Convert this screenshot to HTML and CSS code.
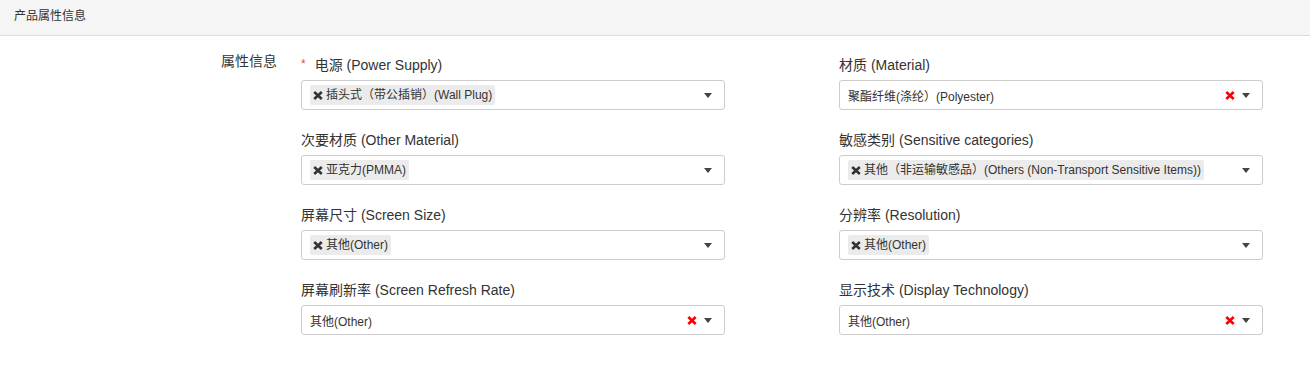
FILE: index.html
```html
<!DOCTYPE html>
<html lang="zh-CN">
<head>
    <meta charset="UTF-8">
    <meta name="viewport" content="width=device-width, initial-scale=1.0">
    <title>产品属性信息</title>
    <link rel="stylesheet" href="styles.css">
</head>
<body>
    <div class="panel-head">产品属性信息</div>
    <div class="panel-body">
        <div class="group-label">属性信息</div>
        <div class="fields">
            <div class="field">
                <label class="field-label"><span class="req">*</span>电源 (Power Supply)</label>
                <div class="select">
                    <div class="select-value">
                        <span class="tag"><svg class="tag-x" width="10" height="9" viewBox="0 0 10 9"><path d="M1.2 1 L8.8 8 M8.8 1 L1.2 8" /></svg>插头式（带公插销）(Wall Plug)</span>
                    </div>
                    <span class="arrow"></span>
                </div>
            </div>
            <div class="field">
                <label class="field-label">材质 (Material)</label>
                <div class="select">
                    <div class="select-value">聚酯纤维(涤纶）(Polyester)</div>
                    <svg class="clear" width="10" height="9" viewBox="0 0 10 9"><path d="M1.3 1 L8.7 8 M8.7 1 L1.3 8" /></svg>
                    <span class="arrow"></span>
                </div>
            </div>
            <div class="field">
                <label class="field-label">次要材质 (Other Material)</label>
                <div class="select">
                    <div class="select-value">
                        <span class="tag"><svg class="tag-x" width="10" height="9" viewBox="0 0 10 9"><path d="M1.2 1 L8.8 8 M8.8 1 L1.2 8" /></svg>亚克力(PMMA)</span>
                    </div>
                    <span class="arrow"></span>
                </div>
            </div>
            <div class="field">
                <label class="field-label">敏感类别 (Sensitive categories)</label>
                <div class="select">
                    <div class="select-value">
                        <span class="tag"><svg class="tag-x" width="10" height="9" viewBox="0 0 10 9"><path d="M1.2 1 L8.8 8 M8.8 1 L1.2 8" /></svg>其他（非运输敏感品）(Others (Non-Transport Sensitive Items))</span>
                    </div>
                    <span class="arrow"></span>
                </div>
            </div>
            <div class="field">
                <label class="field-label">屏幕尺寸 (Screen Size)</label>
                <div class="select">
                    <div class="select-value">
                        <span class="tag"><svg class="tag-x" width="10" height="9" viewBox="0 0 10 9"><path d="M1.2 1 L8.8 8 M8.8 1 L1.2 8" /></svg>其他(Other)</span>
                    </div>
                    <span class="arrow"></span>
                </div>
            </div>
            <div class="field">
                <label class="field-label">分辨率 (Resolution)</label>
                <div class="select">
                    <div class="select-value">
                        <span class="tag"><svg class="tag-x" width="10" height="9" viewBox="0 0 10 9"><path d="M1.2 1 L8.8 8 M8.8 1 L1.2 8" /></svg>其他(Other)</span>
                    </div>
                    <span class="arrow"></span>
                </div>
            </div>
            <div class="field">
                <label class="field-label">屏幕刷新率 (Screen Refresh Rate)</label>
                <div class="select">
                    <div class="select-value">其他(Other)</div>
                    <svg class="clear" width="10" height="9" viewBox="0 0 10 9"><path d="M1.3 1 L8.7 8 M8.7 1 L1.3 8" /></svg>
                    <span class="arrow"></span>
                </div>
            </div>
            <div class="field">
                <label class="field-label">显示技术 (Display Technology)</label>
                <div class="select">
                    <div class="select-value">其他(Other)</div>
                    <svg class="clear" width="10" height="9" viewBox="0 0 10 9"><path d="M1.3 1 L8.7 8 M8.7 1 L1.3 8" /></svg>
                    <span class="arrow"></span>
                </div>
            </div>
        </div>
    </div>
</body>
</html>
```

FILE: styles.css
```css
body {
    margin: 0;
    font-family: "Liberation Sans", Arial, "Noto Sans CJK SC", sans-serif;
    color: #333;
    background-color: #fff;
}

.panel-head {
    height: 35px;
    line-height: 32px;
    padding-left: 14px;
    font-size: 12px;
    background-color: #f5f5f5;
    border-bottom: 1px solid #ddd;
}

.panel-body {
    display: flex;
    align-items: flex-start;
    padding-top: 15px;
}

.group-label {
    width: 277px;
    height: 20px;
    text-align: right;
    font-size: 14px;
    line-height: 20px;
    margin-right: 24px;
}

.fields {
    display: grid;
    grid-template-columns: 424px 424px;
    column-gap: 114px;
    row-gap: 20px;
    padding-top: 4px;
}

.field-label {
    display: block;
    height: 20px;
    font-size: 14px;
    line-height: 20px;
    margin-bottom: 5px;
}

.req {
    color: #e0533d;
    font-size: 12px;
    margin-right: 9px;
    position: relative;
    top: -2px;
}

.select {
    display: flex;
    align-items: center;
    box-sizing: border-box;
    height: 30px;
    border: 1px solid #ccc;
    border-radius: 3px;
    padding: 0 12px 0 8px;
    font-size: 12px;
}

.select-value {
    flex: 1;
    white-space: nowrap;
}

.tag {
    display: inline-flex;
    align-items: center;
    height: 20px;
    line-height: 20px;
    padding: 0 3px;
    background-color: #ebebeb;
    border-radius: 2px;
}

.tag-x {
    margin-right: 3px;
}

.tag-x path {
    stroke: #333;
    stroke-width: 2.6;
    fill: none;
}

.clear {
    margin-right: 7px;
}

.clear path {
    stroke: #f00;
    stroke-width: 2.6;
    fill: none;
}

.arrow {
    width: 0;
    height: 0;
    border-style: solid;
    border-width: 5px 4px 0 4px;
    border-color: #444 transparent transparent transparent;
}
```
